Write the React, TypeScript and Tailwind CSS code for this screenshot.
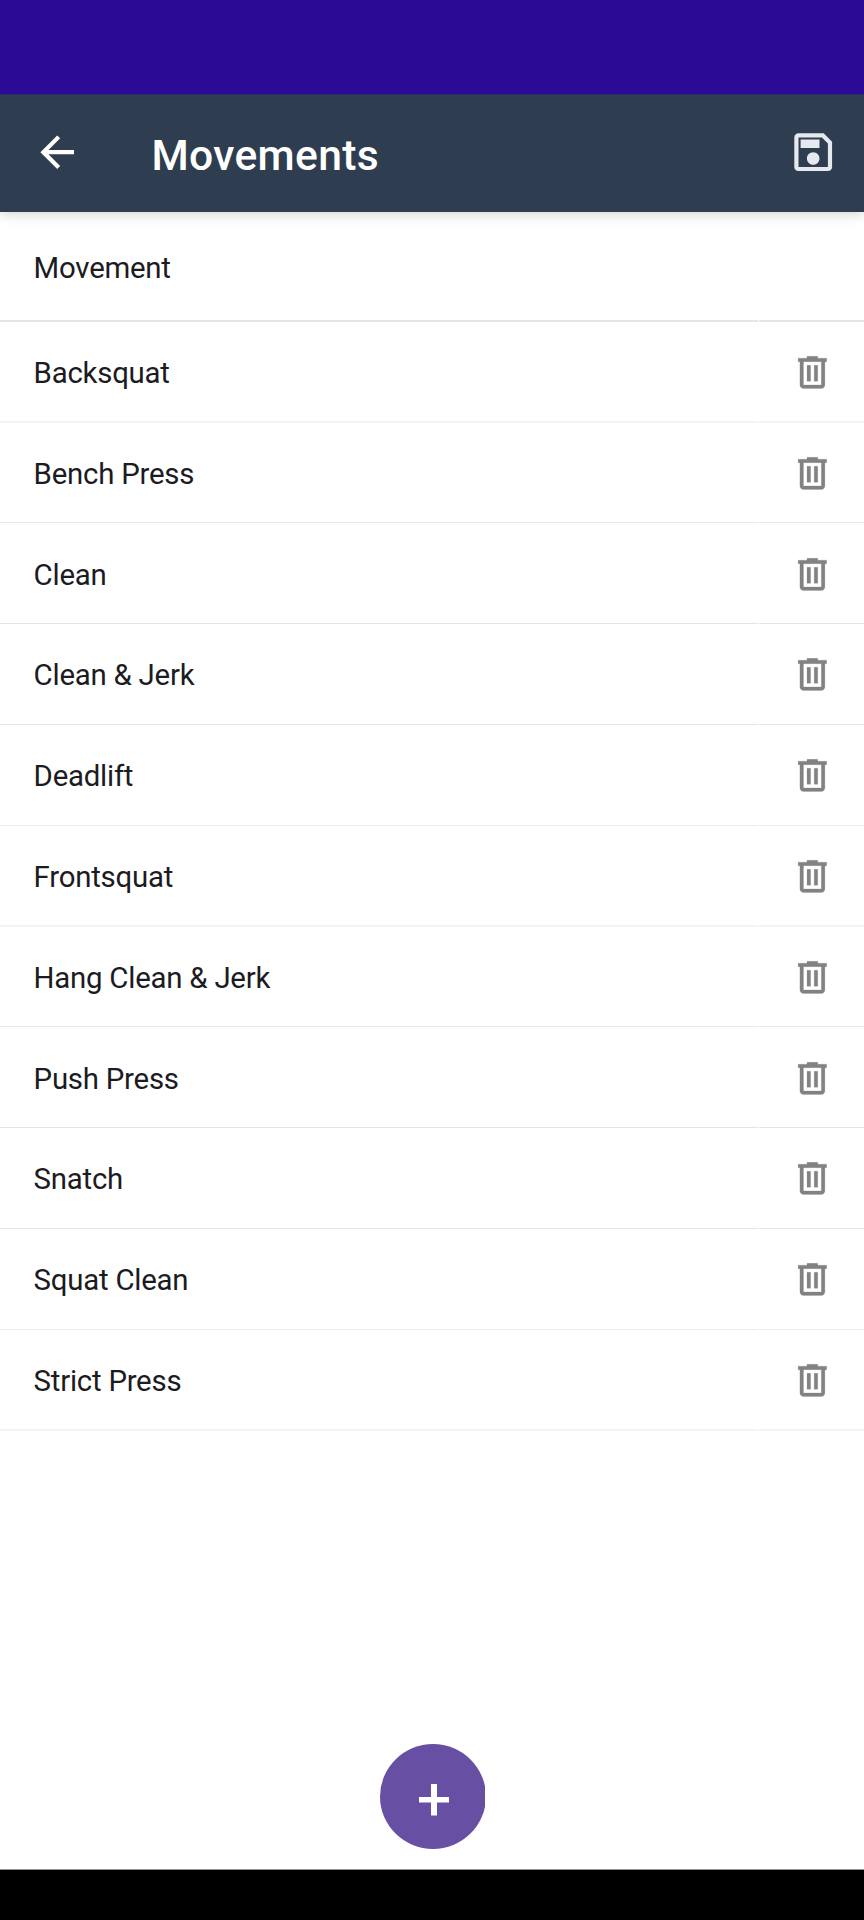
const rows = [
  { name: "Backsquat", size: "h-[101px]", line: "h-[2px] bg-[#f3f3f4]" },
  { name: "Bench Press", size: "h-[100px]", line: "h-px bg-[#e7e7ed]" },
  { name: "Clean", size: "h-[101px] pt-px", line: "h-px bg-[#e4e4e6]" },
  { name: "Clean & Jerk", size: "h-[101px]", line: "h-px bg-[#e4e4e8]" },
  { name: "Deadlift", size: "h-[101px]", line: "h-px bg-[#ebebed]" },
  { name: "Frontsquat", size: "h-[101px]", line: "h-[2px] bg-[#f3f3f4]" },
  { name: "Hang Clean & Jerk", size: "h-[100px]", line: "h-px bg-[#e7e7ed]" },
  { name: "Push Press", size: "h-[101px] pt-px", line: "h-px bg-[#e4e4e7]" },
  { name: "Snatch", size: "h-[101px]", line: "h-px bg-[#e4e4ea]" },
  { name: "Squat Clean", size: "h-[101px]", line: "h-px bg-[#ebebed]" },
  { name: "Strict Press", size: "h-[101px]", line: "h-[2px] bg-[#f3f3f4]" },
];

function BackIcon() {
  return (
    <svg viewBox="0 0 24 24" className="size-[50.4px] fill-white">
      <path d="M20 11H7.83l5.59-5.59L12 4l-8 8 8 8 1.41-1.41L7.83 13H20v-2z" />
    </svg>
  );
}

function SaveIcon() {
  return (
    <svg viewBox="0 0 24 24" className="size-[50.4px] fill-[#e6e9ed]">
      <path d="M17 3H5c-1.11 0-2 .9-2 2v14c0 1.1.89 2 2 2h14c1.1 0 2-.9 2-2V7l-4-4zm2 16H5V5h11.17L19 7.83V19zm-7-7c-1.66 0-3 1.34-3 3s1.34 3 3 3 3-1.34 3-3-1.34-3-3-3zM6 6h9v4H6z" />
    </svg>
  );
}

function TrashIcon() {
  return (
    <svg viewBox="0 0 24 24" className="size-[42.8px] fill-[#828282] stroke-[#828282] stroke-[0.12]">
      <path d="M7 21q-.825 0-1.412-.587T5 19V6H4V4h5V3h6v1h5v2h-1v13q0 .825-.587 1.413T17 21zM17 6H7v13h10zM9 17h2V8H9zm4 0h2V8h-2z" />
    </svg>
  );
}

export default function App() {
  return (
    <div className="flex h-[1920px] w-[864px] flex-col bg-white font-[Roboto,sans-serif] text-[#1c1b1f]">
      <div className="z-20 h-[94px] shrink-0 bg-[#2b0a96]" />
      <header className="z-10 flex h-[118px] shrink-0 items-center border-t border-[#2d2f63] bg-[#2e3e50] pr-[26px] pl-8 shadow-[0_2px_12px_rgba(0,0,0,0.18)]">
        <button className="mt-[-2px]" aria-label="Back">
          <BackIcon />
        </button>
        <h1 className="ml-[69px] pt-[2px] text-[42.6px] leading-[50px] font-medium tracking-[0.35px] text-white">Movements</h1>
        <button className="mt-[-2px] ml-auto" aria-label="Save">
          <SaveIcon />
        </button>
      </header>
      <main className="flex grow flex-col">
        <div className="flex h-[108px] items-center pt-1 pl-[33.6px] text-[29.4px] leading-[40px] tracking-[-0.24px]">Movement</div>
        <div className="flex h-[2px] gap-px">
          <div className="w-[758px] bg-[#e4e4eb]" />
          <div className="grow bg-[#e4e4eb]" />
        </div>
        <ul>
          {rows.map((row) => (
            <li key={row.name} className={`flex flex-col justify-between ${row.size}`}>
              <div className="flex h-[99px] items-center justify-between pr-[30.3px] pl-[33.6px]">
                <span className="pt-[3px] text-[29.4px] leading-[40px] tracking-[-0.24px]">{row.name}</span>
                <button className="pt-[0.8px]" aria-label={`Delete ${row.name}`}>
                  <TrashIcon />
                </button>
              </div>
              <div className="flex gap-px">
                <div className={`w-[758px] ${row.line}`} />
                <div className={`grow ${row.line}`} />
              </div>
            </li>
          ))}
        </ul>
        <div className="mt-auto mb-5 flex justify-center">
          <button aria-label="Add movement" className="h-[105px] w-[105px] overflow-hidden">
            <span className="flex h-[105px] w-[106px] items-center justify-center rounded-[50%] bg-[#6750a4]">
              <svg viewBox="0 0 30 32" className="mt-[7px] ml-0.5 h-8 w-[30px] fill-white">
                <path d="M12 0h6v13h12v5.5H18v13h-6v-13H0V13h12z" />
              </svg>
            </span>
          </button>
        </div>
      </main>
      <footer className="h-[51px] shrink-0 border-t border-[#969696] bg-black" />
    </div>
  );
}
